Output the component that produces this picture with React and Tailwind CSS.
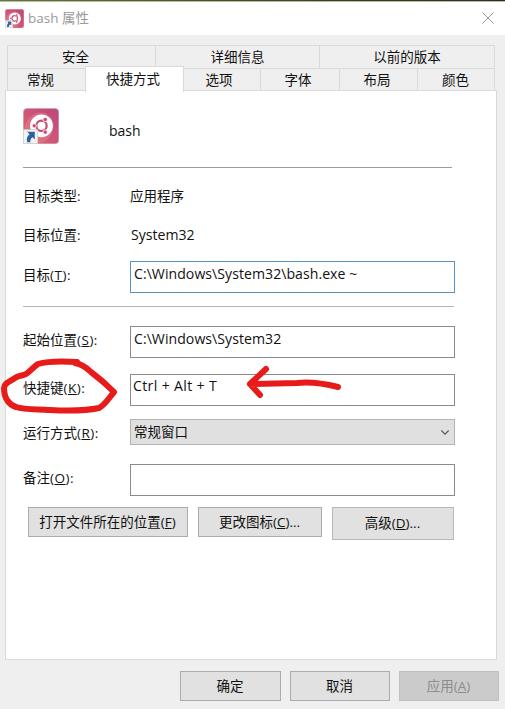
function UbuntuIcon({ className }) {
  return (
    <svg viewBox="0 0 36 36" className={className}>
      <defs>
        <linearGradient id="tile" x1="0" y1="1" x2="1" y2="0">
          <stop offset="0" stopColor="#df6c6b" />
          <stop offset="0.5" stopColor="#cf5478" />
          <stop offset="1" stopColor="#b8487f" />
        </linearGradient>
      </defs>
      <rect x="0.4" y="0.4" width="35.4" height="35.4" rx="4" fill="url(#tile)" stroke="#d69aaa" strokeWidth="0.8" />
      <ellipse cx="16" cy="20" rx="14" ry="16" fill="#e58f93" opacity="0.4" transform="rotate(35 16 20)" />
      <circle cx="18.5" cy="17.8" r="11.4" fill="#fff" />
      <circle cx="18.5" cy="17.8" r="5.2" fill="none" stroke="#c74c74" strokeWidth="2.2" />
      <g fill="#c74c74" stroke="#fff" strokeWidth="0.8">
        <circle cx="11.2" cy="17.8" r="2.1" />
        <circle cx="22.2" cy="11.5" r="2.2" />
        <circle cx="22.2" cy="24.1" r="2.2" />
      </g>
      <rect x="0.2" y="21.5" width="14.6" height="14.3" fill="#f1f2f4" stroke="#c8c4c9" strokeWidth="0.7" />
      <path d="M4.2 23.8h7.6v7.6l-2.2-2.2c-1.9 1.4-2.6 2.9-2.2 5H4.3c-1-3.2-.4-5.6 2.2-7.9z" fill="#2d629f" />
    </svg>
  );
}

function Tab({ className, children }) {
  return <div className={`flex shrink-0 items-center justify-center border-[#dadada] ${className}`}>{children}</div>;
}

function Key({ children }) {
  return <span className="underline decoration-1 underline-offset-1">{children}</span>;
}

function Row({ className, labelClass = 'pb-[3px]', label, hotkey, children }) {
  return (
    <div className={`flex ${className}`}>
      <div className={`flex w-[107px] shrink-0 items-center whitespace-nowrap ${labelClass}`}>
        <span>
          {label}
          {hotkey && (
            <span className="tracking-[0.5px]">
              (<Key>{hotkey}</Key>):
            </span>
          )}
        </span>
      </div>
      {children}
    </div>
  );
}

function Field({ className = 'border-[#8b8b8b] pt-px', children }) {
  return (
    <div className={`h-8 w-[325px] whitespace-pre border bg-white pl-[3px] text-[14.1px] leading-5 ${className}`}>{children}</div>
  );
}

function Button({ className, children }) {
  return (
    <div className={`flex shrink-0 items-center justify-center whitespace-nowrap border pb-px pr-px ${className}`}>
      <span>{children}</span>
    </div>
  );
}

export default function App() {
  return (
    <div className="relative flex h-[709px] w-[505px] flex-col overflow-hidden bg-[#efefef] font-['Open_Sans','Noto_Sans_CJK_SC',sans-serif] text-[13.5px] leading-5 text-[#111]">
      <div className="h-px bg-gradient-to-r from-[#667a35] via-[#3d4d22] to-[#302d1e]" />
      <div className="h-px bg-[#b9bba9]" />
      <header className="flex h-[33px] items-center bg-white pl-[5px] pr-[11px] text-[#999]">
        <UbuntuIcon className="-mt-px h-[19px] w-[19px]" />
        <span className="-mt-[2px] ml-1 text-[13.5px]">bash 属性</span>
        <svg viewBox="0 0 12 12" className="-mt-[2px] ml-auto h-3 w-3" fill="none" stroke="#999" strokeWidth="1">
          <path d="M.5.5l11 11M11.5.5l-11 11" />
        </svg>
      </header>

      <nav className="ml-[7px] mt-[10px] flex h-[23px] w-[488px] shrink-0 border border-b-0 border-[#dadada]">
        <Tab className="w-[148px] border-r pr-3">安全</Tab>
        <Tab className="w-[164px] border-r">详细信息</Tab>
        <Tab className="flex-1">以前的版本</Tab>
      </nav>
      <div className="z-10 ml-[7px] flex h-[23px] w-[488px] shrink-0">
        <Tab className="w-[78px] border-l border-t pr-3">常规</Tab>
        <Tab className="-mt-[2px] h-[26px] w-[99px] border-x border-t bg-white pb-[2px] pr-[3px]">快捷方式</Tab>
        <Tab className="w-[76px] border-t pr-[6px]">选项</Tab>
        <Tab className="w-[79px] border-l border-t pr-[4px]">字体</Tab>
        <Tab className="w-[78px] border-l border-t pr-[3px]">布局</Tab>
        <Tab className="w-[78px] border-x border-t pr-px">颜色</Tab>
      </div>

      <main className="-mt-px ml-[5px] h-[570px] w-[492px] shrink-0 border border-[#dadada] bg-white pl-[17px]">
        <div className="flex h-[77px] w-[429px] items-center border-b border-[#9b9b9b]">
          <UbuntuIcon className="-mt-[7px] h-9 w-9" />
          <span className="ml-[50px] mt-[4px] text-[14px]">bash</span>
        </div>
        <Row className="h-[58px]" label="目标类型:">
          <span className="flex items-center pb-[3px]">应用程序</span>
        </Row>
        <Row className="h-5" label="目标位置:">
          <span className="flex items-center pb-[3px] pl-px text-[14.1px]">System32</span>
        </Row>
        <Row className="mt-[15px] h-8" labelClass="pb-[5px]" label="目标" hotkey="T">
          <Field className="border-[#4f94c4] pt-[2px]"><span className="tracking-[0.04px]">{'C:\\Windows\\System32\\bash.exe ~'}</span></Field>
        </Row>
        <div className="mt-[13px] h-px w-[431px] bg-[#b5b5b5]" />
        <Row className="mt-[19px] h-8" labelClass="pb-[5px]" label="起始位置" hotkey="S">
          <Field className="border-[#8b8b8b] pt-[2px]"><span className="tracking-[0.04px]">{'C:\\Windows\\System32'}</span></Field>
        </Row>
        <Row className="mt-4 h-8" labelClass="pb-[5px]" label="快捷键" hotkey="K">
          <Field><span className="-ml-px tracking-[0.35px]">Ctrl + Alt + T</span></Field>
        </Row>
        <Row className="mt-[13px] h-[26px]" labelClass="pt-px" label="运行方式" hotkey="R">
          <div className="flex w-[325px] items-center justify-between border border-[#b3b3b3] bg-[#e0e0e0] pl-[3px] pr-[5px]">
            <span>常规窗口</span>
            <svg viewBox="0 0 8 5" className="h-[5px] w-2" fill="none" stroke="#555" strokeWidth="1.1">
              <path d="M.3.4L4 4.2 7.7.4" />
            </svg>
          </div>
        </Row>
        <Row className="mt-[19px] h-8" labelClass="pb-[5px]" label="备注" hotkey="O">
          <Field />
        </Row>
        <div className="ml-[5px] mt-[11px] flex items-start gap-[10px]">
          <Button className="h-[30px] w-[160px] border-[#acacac] bg-[#e1e1e1]">打开文件所在的位置(<Key>F</Key>)</Button>
          <Button className="h-[30px] w-[124px] border-[#acacac] bg-[#e1e1e1]">更改图标(<Key>C</Key>)...</Button>
          <Button className="h-[33px] w-[122px] border-[#b8b8b8] bg-[#e1e1e1]">高级(<Key>D</Key>)...</Button>
        </div>
      </main>

      <footer className="ml-[180px] mt-[11px] flex">
        <Button className="h-[30px] w-[101px] border-[#acacac] bg-[#e1e1e1]">确定</Button>
        <Button className="ml-[9px] h-[30px] w-[100px] border-[#acacac] bg-[#e1e1e1]">取消</Button>
        <Button className="ml-[9px] h-[30px] w-[100px] border-[#c1c1c1] bg-[#cbcbcb] text-[#8c8c8c]">应用(<Key>A</Key>)</Button>
      </footer>

      <svg viewBox="0 0 505 709" className="pointer-events-none absolute inset-0 z-20 h-[709px] w-[505px]" fill="none" stroke="#e81b1b" strokeWidth="6" strokeLinecap="round" strokeLinejoin="round">
        <path d="M77 362C62 361 48 361 38 364C34 366 31 371 26 374C23 376 19 375 15 378C11 381 4 383 4 388C4 398 9 405 16 407C25 410 37 409 50 410C68 411 85 411 99 408C105 405 109 398 114 392C107 385 99 378 91 372C86 367 80 364 75 363" />
        <path d="M338 387C318 382 307 382 297 383L250 384L266 369M250 384L260 395" />
      </svg>
    </div>
  );
}
